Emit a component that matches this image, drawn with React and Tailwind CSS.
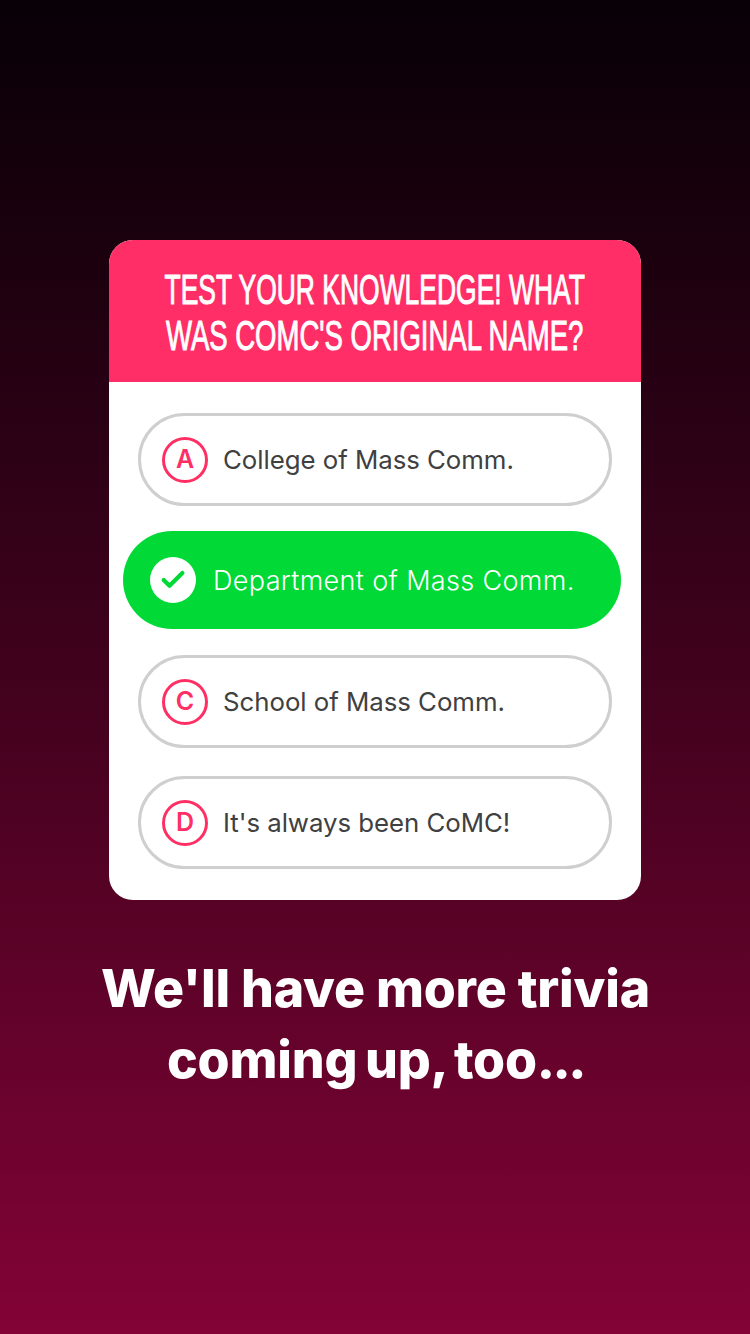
import { Check } from 'lucide-react';

const OPTIONS = [
  { letter: 'A', text: 'College of Mass Comm.', className: 'mb-[25px]' },
  { letter: 'B', text: 'Department of Mass Comm.', correct: true, className: 'mb-[26px]' },
  { letter: 'C', text: 'School of Mass Comm.', className: 'mb-[28px]' },
  { letter: 'D', text: "It's always been CoMC!", className: '' },
];

function Option({ option }) {
  if (option.correct) {
    return (
      <div className={`mx-[14px] flex h-[98px] w-[498px] items-center rounded-full bg-[#00d936] pl-[27px] ${option.className}`}>
        <span className="flex h-[46px] w-[46px] items-center justify-center rounded-full bg-white">
          <Check size={28} strokeWidth={3.6} className="text-[#00d936]" />
        </span>
        <span className="mt-[2px] ml-[17px] text-[27px] font-light tracking-[0.35px] text-white">{option.text}</span>
      </div>
    );
  }

  return (
    <div className={`mx-[29px] flex h-[93px] w-[474px] items-center rounded-full border-[3px] border-[#cfcfcf] pl-[21px] ${option.className}`}>
      <span className="flex h-[46px] w-[46px] items-center justify-center rounded-full border-[3px] border-[#ff2e63] text-[25px] font-semibold text-[#ff2e63]">
        {option.letter}
      </span>
      <span className="mt-[2px] ml-[15px] text-[25.8px] tracking-[-0.03px] text-[#404040]">{option.text}</span>
    </div>
  );
}

export default function App() {
  return (
    <div className="flex h-[1334px] w-[750px] flex-col items-center overflow-hidden bg-gradient-to-b from-[#080006] to-[#830336] pt-[240px] font-['Inter',sans-serif]">
      <div className="w-[532px] overflow-hidden rounded-[24px] bg-white">
        <div className="flex h-[142px] flex-col items-center justify-center bg-[#ff2e66] pt-[4px] font-['Liberation_Sans',sans-serif] text-[42px] leading-[46px] whitespace-nowrap text-white [-webkit-text-stroke:1px_white]">
          <div className="scale-x-[0.63]">TEST YOUR KNOWLEDGE! WHAT</div>
          <div className="scale-x-[0.655]">WAS COMC'S ORIGINAL NAME?</div>
        </div>
        <div className="pt-[31px] pb-[31px]">
          {OPTIONS.map((o) => (
            <Option key={o.letter} option={o} />
          ))}
        </div>
      </div>
      <div className="mt-[53px] pl-[1px] text-center text-[51.8px] leading-[71px] font-extrabold tracking-[-0.2px] text-white">
        <div>We'll have more trivia</div>
        <div className="[word-spacing:-3.5px]">
          coming up, too<span className="tracking-[-2.5px]">...</span>
        </div>
      </div>
    </div>
  );
}
